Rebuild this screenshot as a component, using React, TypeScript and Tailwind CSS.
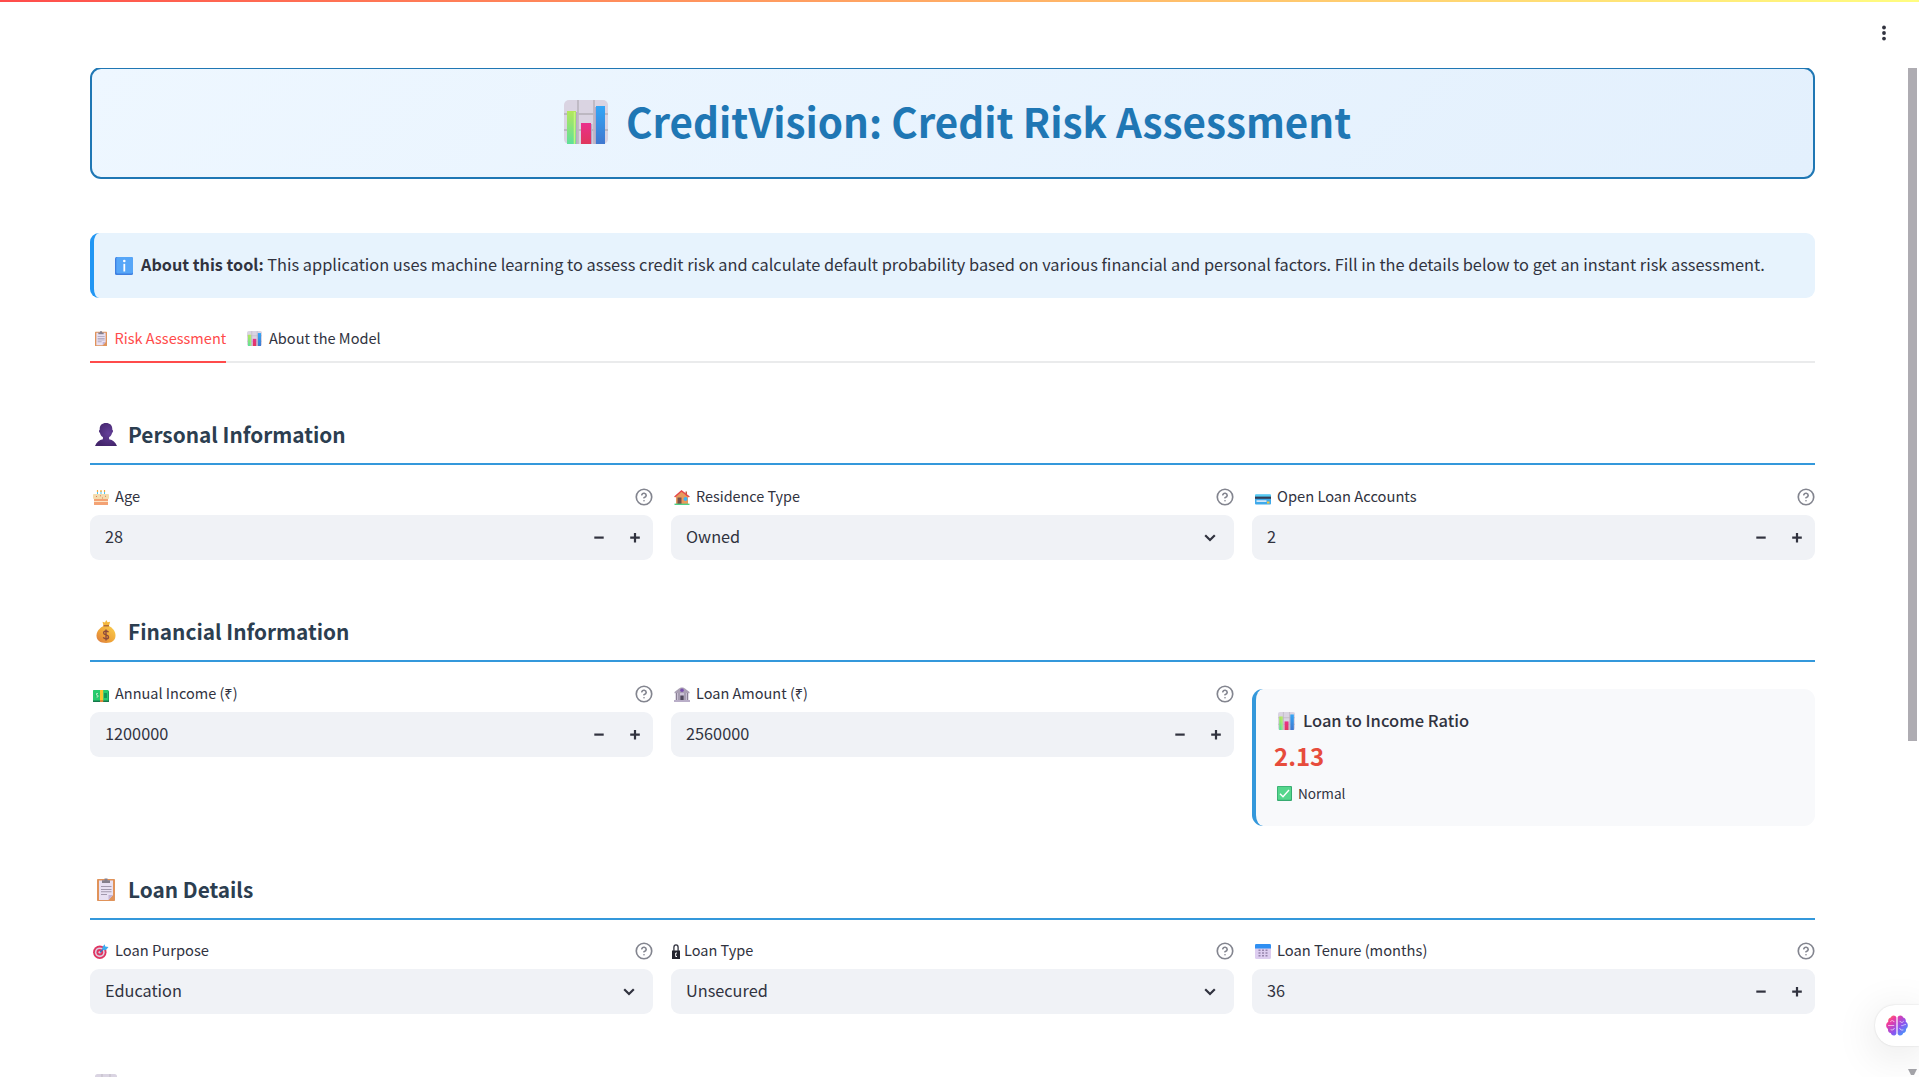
import type { ReactNode } from "react";

type IconProps = { className?: string };

function ChartIcon({ className }: IconProps) {
  return (
    <svg className={className} viewBox="0 0 44 44" preserveAspectRatio="none">
      <defs>
        <linearGradient id="barGreen" x1="0" y1="0" x2="0" y2="1">
          <stop offset="0" stopColor="#b4e65c" />
          <stop offset="1" stopColor="#5fe09a" />
        </linearGradient>
        <linearGradient id="barPink" x1="0" y1="0" x2="0" y2="1">
          <stop offset="0" stopColor="#ea2f8c" />
          <stop offset="1" stopColor="#e0385c" />
        </linearGradient>
        <linearGradient id="barBlue" x1="0" y1="0" x2="0" y2="1">
          <stop offset="0" stopColor="#33a6f6" />
          <stop offset="1" stopColor="#4178cf" />
        </linearGradient>
      </defs>
      <rect width="44" height="44" rx="5" fill="#dad4e2" />
      <path d="M14 0v44M30 0v44M0 14h44M0 30h44" stroke="#bdb8c2" strokeWidth="1.8" />
      <path d="M12.5 12v32M27.5 24v20M31.5 7v37" stroke="#b6a9c6" strokeWidth="1.5" />
      <path d="M3 11h9v33H3z" fill="url(#barGreen)" />
      <path d="M17 23h10v21H17z" fill="url(#barPink)" />
      <path d="M32 6h9v38h-9z" fill="url(#barBlue)" />
      <path d="M10.500 12v32" stroke="#c5f57d" strokeWidth="1.500" />
    </svg>
  );
}

function InfoIcon({ className }: IconProps) {
  return (
    <svg className={className} viewBox="0 0 18 18">
      <rect width="18" height="18" rx="1.500" fill="#3f7fe0" />
      <rect x="1.300" width="16.700" height="16.500" rx="1.500" fill="#56a6f8" />
      <circle cx="9.300" cy="4" r="1.300" fill="#fff" />
      <path d="M9.300 6.800v7.700" stroke="#fff" strokeWidth="1.800" />
    </svg>
  );
}

function ClipboardIcon({ className }: IconProps) {
  return (
    <svg className={className} viewBox="0 0 18 23" preserveAspectRatio="none">
      <rect y="1" width="18" height="22" rx=".8" fill="#e0935a" />
      <path d="M2 2.500h14V17l-4.500 5H2z" fill="#e8e0f2" />
      <path d="M16 17l-4.500 5v-5z" fill="#c3b4d6" />
      <path d="M5 2.200h2.500V.4h3v1.800H13V5H5z" fill="#857f8c" />
      <path d="M4 8.500h10.500M4 11.500h10.500M4 13.700h10.500M4 16.500h6" stroke="#a198ad" strokeWidth="1.100" />
    </svg>
  );
}

function PersonIcon({ className }: IconProps) {
  return (
    <svg className={className} viewBox="0 0 22 23">
      <defs>
        <radialGradient id="bust" cx=".62" cy=".45" r=".6">
          <stop offset="0" stopColor="#643f99" />
          <stop offset="1" stopColor="#43256b" />
        </radialGradient>
      </defs>
      <path
        d="M11 0c4 0 6.300 2.200 6.300 6v.8c1 .1 1 2.700-.2 2.900-.5 2.200-1.500 3.500-3 4.400v2.100c3.700.8 6.500 2.800 7.900 6.800H0c1.400-4 4.200-6 7.900-6.800v-2.100c-1.500-.9-2.500-2.200-3-4.400-1.200-.2-1.200-2.800-.2-2.900V6C4.700 2.200 7 0 11 0z"
        fill="url(#bust)"
      />
    </svg>
  );
}

function MoneyBagIcon({ className }: IconProps) {
  return (
    <svg className={className} viewBox="0 0 19 23">
      <defs>
        <linearGradient id="bag" x1="1" y1="0" x2="0" y2="1">
          <stop offset="0" stopColor="#fbd04e" />
          <stop offset=".6" stopColor="#eea037" />
          <stop offset="1" stopColor="#d97742" />
        </linearGradient>
      </defs>
      <path d="M6 1.800l2.500.6L9.700 0l1.400 2.200 2.500-.4-1.300 4.700H7.200z" fill="#f4b73c" />
      <path d="M7 6h5.500c3.500 1.700 6.500 5.300 6.500 9.600 0 5-3.500 7.400-9.500 7.400S0 20.600 0 15.600C0 11.300 3.500 7.700 7 6z" fill="url(#bag)" />
      <path d="M7 5.800h5.500" stroke="#a35a35" strokeWidth="1.200" />
      <path d="M12 12.300c-.5-1-1.400-1.300-2.500-1.300-1.400 0-2.400.7-2.400 1.900 0 2.600 4.900 1.300 4.900 4 0 1.200-1.100 2-2.500 2s-2.300-.6-2.700-1.600M9.500 9.500V20.500" fill="none" stroke="#8d4a3c" strokeWidth="1.400" />
    </svg>
  );
}

function CakeIcon({ className }: IconProps) {
  return (
    <svg className={className} viewBox="0 0 16 15">
      <path d="M4.500 1v4M8 1v4M11.500 1v4" stroke="#4fc3ea" strokeWidth="1" />
      <path d="M4.500 0v2M8 0v2M11.500 0v2" stroke="#f5a93a" strokeWidth="1.200" />
      <rect x="1" y="8" width="14" height="7" rx=".6" fill="#f3a274" />
      <rect y="4" width="16" height="5" rx="1" fill="#f3dcae" />
      <path d="M1 11.500h14" stroke="#fde3c4" strokeWidth="1" />
      <path d="M3 6.500h1M7 5.800h1M9 8h1M12 6.300h1" stroke="#e0795a" strokeWidth="1" />
    </svg>
  );
}

function HouseIcon({ className }: IconProps) {
  return (
    <svg className={className} viewBox="0 0 16 15">
      <path d="M2 6l6-5 6 5v8.500H2z" fill="#e89a5c" />
      <path d="M11.500 1.500H13V6l-1.500-1z" fill="#c0603d" />
      <rect x="3.500" y="7.500" width="4" height="7" fill="#75514a" />
      <circle cx="11.500" cy="9" r="2" fill="#3fb0f2" />
      <path d="M.6 7L7.500 1l7.900 6" fill="none" stroke="#e5484b" strokeWidth="1.500" />
      <path d="M.5 14.300h15" stroke="#4fcf86" strokeWidth="1.400" />
    </svg>
  );
}

function CardIcon({ className }: IconProps) {
  return (
    <svg className={className} viewBox="0 0 16 15">
      <rect y="4.500" width="16" height="10" rx="1" fill="#3fa9ea" />
      <path d="M0 5.500q0-1 1-1h14q1 0 1 1V7H0z" fill="#55cdf5" />
      <rect y="6.600" width="16" height="2.200" fill="#323c55" />
      <rect x="1.500" y="10.300" width="10" height="1.600" fill="#e3eefa" />
      <rect x="12" y="11.500" width="2.500" height="2" fill="#f7c63c" />
    </svg>
  );
}

function CashIcon({ className }: IconProps) {
  return (
    <svg className={className} viewBox="0 0 16 15">
      <rect y="4" width="16" height="11" rx=".6" fill="#15764a" />
      <rect y="3" width="15.500" height="10.500" rx=".6" fill="#27cc6e" />
      <ellipse cx="4" cy="8.300" rx="1.700" ry="2.600" fill="#1fb660" />
      <path d="M5 6.500H3.500v1.700H5V10H3.300" fill="none" stroke="#d2f7d8" strokeWidth=".8" />
      <path d="M11 6h3v5h-3z" fill="#16975a" />
      <rect x="7" y="3" width="3.200" height="10.500" fill="#fbc52f" />
      <rect x="7" y="13" width="3.200" height="2" fill="#e2853b" />
    </svg>
  );
}

function BankIcon({ className }: IconProps) {
  return (
    <svg className={className} viewBox="0 0 16 15">
      <path d="M5 1.500C6 0 10 0 11 1.500L15.500 5v1.200H.5V5z" fill="#aaa0b4" />
      <rect x="1.500" y="6" width="13" height="7" fill="#cbc2d6" />
      <path d="M2.500 6v7M5 6v7M11 6v7M13.500 6v7" stroke="#8a8095" strokeWidth="1.100" />
      <rect x="6.300" y="8.500" width="3.400" height="4.500" fill="#50485c" />
      <circle cx="8" cy="3.300" r="1.800" fill="#7a4fb0" />
      <path d="M0 14h16" stroke="#b9aec8" strokeWidth="2" />
    </svg>
  );
}

function TargetIcon({ className }: IconProps) {
  return (
    <svg className={className} viewBox="0 0 16 15">
      <circle cx="6.800" cy="8.300" r="6.700" fill="#e03460" />
      <circle cx="6.800" cy="8.300" r="4.900" fill="#dccfe2" />
      <circle cx="6.800" cy="8.300" r="3.300" fill="#e03460" />
      <circle cx="6.800" cy="8.300" r="1.300" fill="#dccfe2" />
      <path d="M7 8.200l4-4" stroke="#2879c8" strokeWidth="1.300" />
      <path d="M9.500 2.700L11.700.2l.5 2.300L15.500 3 13 6H9.500z" fill="#3cabee" />
    </svg>
  );
}

function LockIcon({ className }: IconProps) {
  return (
    <svg className={className} viewBox="0 0 8 15">
      <path d="M1.900 7V3.400C1.900 1.700 2.700.8 4 .8s2.100.9 2.100 2.600V7" fill="none" stroke="#31333f" strokeWidth="1.300" />
      <path d="M0 6.500h8V15H0z" fill="#23242e" />
      <path d="M5 9H3.700v3.500H5" fill="none" stroke="#fff" strokeWidth="1" />
    </svg>
  );
}

function CalendarIcon({ className }: IconProps) {
  return (
    <svg className={className} viewBox="0 0 16 15">
      <rect y="1" width="16" height="14" rx="1.500" fill="#ddcdf0" />
      <path d="M0 4.500V1.300Q0 0 1.300 0h13.400Q16 0 16 1.300v3.200z" fill="#2f8ff2" />
      <path d="M3.500 6.300h2M7 6.300h2M10.500 6.300h2M3.500 9h2M7 9h2M10.500 9h2M3.500 11.700h2M7 11.700h2M10.500 11.700h2" stroke="#9685ac" strokeWidth="1.400" />
    </svg>
  );
}

function CheckIcon({ className }: IconProps) {
  return (
    <svg className={className} viewBox="0 0 15 15">
      <rect width="15" height="15" rx="1" fill="#36aa70" />
      <rect x=".8" y=".8" width="13.200" height="13" rx=".8" fill="#55d68c" />
      <path d="M3 7.700l3 3L12 4" fill="none" stroke="#fff" strokeWidth="1.400" />
    </svg>
  );
}

function HelpIcon() {
  return (
    <svg className="h-[18px] w-[18px] shrink-0" viewBox="0 0 24 24" fill="none" stroke="#83858f" strokeWidth="2.2" strokeLinecap="round" strokeLinejoin="round">
      <circle cx="12" cy="12" r="10.300" />
      <path d="M9.090 9a3 3 0 0 1 5.830 1c0 2-3 3-3 3" />
      <path d="M12 17h.01" />
    </svg>
  );
}

function Stepper() {
  return (
    <div className="mr-[0.5px] flex">
      <span className="flex w-9 items-center justify-center">
        <svg className="h-[10px] w-[10px]" viewBox="0 0 10 10">
          <path d="M.3 4.600h9.400" stroke="#31333f" strokeWidth="2.200" />
        </svg>
      </span>
      <span className="flex w-9 items-center justify-center">
        <svg className="h-[10px] w-[10px]" viewBox="0 0 10 10">
          <path d="M.2 4.600h9.600M5 0v9.400" stroke="#31333f" strokeWidth="2.200" />
        </svg>
      </span>
    </div>
  );
}

function Chevron() {
  return (
    <svg className="mr-[18px] h-[8px] w-3" viewBox="0 0 12 8">
      <path d="M1.200 1.200L6 6l4.800-4.800" fill="none" stroke="#31333f" strokeWidth="2.200" />
    </svg>
  );
}

type FieldProps = {
  icon: ReactNode;
  label: string;
  value: string;
  kind: "number" | "select";
  labelClass?: string;
};

function Field({ icon, label, value, kind, labelClass = "text-[14.7px]" }: FieldProps) {
  return (
    <div>
      <div className="mb-2 flex h-5 items-center justify-between">
        <div className="flex items-center">
          {icon}
          <span className={`pb-[3px] leading-5 whitespace-nowrap ${labelClass}`}>{label}</span>
        </div>
        <HelpIcon />
      </div>
      <div className="flex h-[45px] items-center justify-between rounded-[9px] bg-[#f0f2f6] pl-[15px]">
        <span className="pb-[3px] text-[16.3px] leading-6">{value}</span>
        {kind === "number" ? <Stepper /> : <Chevron />}
      </div>
    </div>
  );
}

function SectionHeading({ icon, children }: { icon: ReactNode; children: ReactNode }) {
  return (
    <h2 className="mt-[42px] flex h-[60px] items-center gap-[11px] border-b-2 border-[#3498db] pl-[5px] text-[20.8px] leading-7 font-bold text-[#2c3e50]">
      {icon}
      <span>{children}</span>
    </h2>
  );
}

const small = "ml-[3px] mr-[6px] h-[15px] w-4 shrink-0";
const big = "h-[23px] w-[22px] shrink-0";

export default function App() {
  return (
    <div className="relative flex h-[1077px] flex-col overflow-hidden bg-white font-['Noto_Sans_CJK_SC','Noto_Sans',sans-serif] text-[#31333f]">
      <div className="absolute inset-x-0 top-0 h-[2px] bg-linear-to-r from-[#ff4b4b] to-[#fffd80]" />
      <header className="flex h-[68px] shrink-0 justify-end pt-[25px] pr-[33px]">
        <svg className="h-4 w-1" viewBox="0 0 4 16" fill="#31333f">
          <circle cx="2" cy="2.500" r="1.900" />
          <circle cx="2" cy="8" r="1.900" />
          <circle cx="2" cy="13.600" r="1.900" />
        </svg>
      </header>

      <div className="flex min-h-0 flex-1 justify-between overflow-hidden pr-[2px] pl-[90px]">
        <main className="w-[1725px]">
          <h1 className="-mt-px flex h-[112px] items-center rounded-[11px] border-2 border-[#1f77b4] bg-linear-135 from-[#eef7ff] to-[#e3f0fd] pl-[472px] text-[40.37px] leading-[50px] font-bold text-[#1f77b4]">
            <ChartIcon className="mr-[18px] mb-[2px] h-11 w-11" />
            <span className="pb-[4px] whitespace-nowrap">CreditVision: Credit Risk Assessment</span>
          </h1>

          <div className="mt-[54px] flex h-[65px] items-center rounded-[9px] border-l-4 border-[#2196f3] bg-[#e7f3fd] pl-[21px]">
            <InfoIcon className="mr-[8px] h-[18px] w-[18px]" />
            <p className="pb-[3px] text-[16.38px] leading-6 whitespace-nowrap">
              <b className="text-[16.2px]">About this tool:</b> This application uses machine learning to assess credit risk and calculate
              default probability based on various financial and personal factors. Fill in the details below to get an instant risk
              assessment.
            </p>
          </div>

          <nav className="mt-[17px] flex h-[46px] items-center pl-[5px] text-[14.55px] leading-5">
            <ClipboardIcon className="mr-[7.5px] h-[15px] w-3" />
            <span className="w-[132.5px] text-[#ff4b4b]">Risk Assessment</span>
            <ChartIcon className="mr-[7px] h-[15px] w-[15px]" />
            <span>About the Model</span>
          </nav>
          <div className="h-[2px] bg-[#eaebec]">
            <div className="h-full w-[136px] bg-[#ff4b4b]" />
          </div>

          <SectionHeading icon={<PersonIcon className={big} />}>Personal Information</SectionHeading>
          <div className="mt-[22px] grid grid-cols-3 gap-[18px]">
            <Field icon={<CakeIcon className={small} />} label="Age" value="28" kind="number" />
            <Field icon={<HouseIcon className={small} />} label="Residence Type" value="Owned" kind="select" labelClass="text-[14.4px]" />
            <Field icon={<CardIcon className={small} />} label="Open Loan Accounts" value="2" kind="number" />
          </div>

          <SectionHeading icon={<MoneyBagIcon className={big} />}>Financial Information</SectionHeading>
          <div className="grid h-[156px] grid-cols-3 items-start gap-[18px]">
            <div className="mt-[22px]">
              <Field icon={<CashIcon className={small} />} label="Annual Income (₹)" value="1200000" kind="number" labelClass="text-[14.5px]" />
            </div>
            <div className="mt-[22px]">
              <Field icon={<BankIcon className={small} />} label="Loan Amount (₹)" value="2560000" kind="number" labelClass="text-[14.5px]" />
            </div>
            <div className="mt-[27px] h-[137px] rounded-[11px] border-l-4 border-[#3498db] bg-[#f8f9fb] pt-5 pl-[18px]">
              <div className="flex h-6 items-center pl-1">
                <ChartIcon className="mr-[8px] h-[18px] w-[17px]" />
                <span className="pb-[2px] text-[16.5px] leading-6 font-medium">Loan to Income Ratio</span>
              </div>
              <div className="mt-[7px] text-[24px] leading-8 font-bold text-[#e74c3c]">2.13</div>
              <div className="mt-[11px] flex h-5 items-center pl-[3px]">
                <CheckIcon className="mr-[6px] h-[15px] w-[15px]" />
                <span className="pb-px text-[13.6px] leading-5">Normal</span>
              </div>
            </div>
          </div>

          <SectionHeading icon={<ClipboardIcon className="mr-[2px] ml-[2px] h-[23px] w-[18px] shrink-0" />}>Loan Details</SectionHeading>
          <div className="mt-[21px] grid grid-cols-3 gap-[18px]">
            <Field icon={<TargetIcon className={small} />} label="Loan Purpose" value="Education" kind="select" />
            <Field icon={<LockIcon className="mr-[4px] ml-px h-[15px] w-2 shrink-0" />} label="Loan Type" value="Unsecured" kind="select" labelClass="text-[14.5px]" />
            <Field icon={<CalendarIcon className={small} />} label="Loan Tenure (months)" value="36" kind="number" />
          </div>

          <SectionHeading icon={<ChartIcon className={big} />}>{""}</SectionHeading>
        </main>

        <div className="flex w-[9px] flex-col justify-between pb-[2px]">
          <div className="h-[673px] bg-[#aeacb2]" />
          <svg className="h-[6px] w-[9px]" viewBox="0 0 9 6">
            <path d="M0 0h9L6 6H3z" fill="#a5a5aa" />
          </svg>
        </div>
      </div>

      <div className="absolute top-[1005px] right-0 flex h-[41px] w-11 items-center rounded-l-[20px] bg-white pl-[11px] shadow-[0_8px_44px_rgba(0,0,0,0.12),0_0_2px_rgba(0,0,0,0.14)]">
        <svg className="h-[21px] w-[22px]" viewBox="0 0 22 21">
          <defs>
            <linearGradient id="brain" x1="0" y1="0" x2="1" y2="1">
              <stop offset="0" stopColor="#ff9a3c" />
              <stop offset=".25" stopColor="#f0399f" />
              <stop offset=".6" stopColor="#8b55f0" />
              <stop offset="1" stopColor="#2bb2ff" />
            </linearGradient>
          </defs>
          <path
            d="M10.400 2.500C9.800-.2 5.500-.2 4.800 2.500 2.500 3 1.800 5 2.300 6.800-.5 8.200-.5 12.400 2 14c-.3 2 .8 3.600 2.700 4 1 3.300 5 3.300 5.700.4zM11.600 2.500c.6-2.700 4.900-2.700 5.600 0 2.300.5 3 2.500 2.500 4.300 2.800 1.400 2.800 5.600.3 7.200.3 2-.8 3.600-2.700 4-1 3.300-5 3.300-5.700.4z"
            fill="url(#brain)"
          />
          <path
            d="M4.500 6.500c1-1.300 3-1.300 3.600.2M2.500 10.500h5.300M5 14.800c1.400.7 3 0 3.300-1.400M17.500 6.500c-1 1.500-2.800 1.200-3.600-.2M19.500 9.500c-2 0-2.300 1.500-3.800 1.200M17 15c-1.700.5-3-.3-3.300-1.600"
            fill="none"
            stroke="#fff"
            strokeOpacity=".7"
            strokeWidth=".9"
            strokeLinecap="round"
          />
        </svg>
      </div>
    </div>
  );
}
